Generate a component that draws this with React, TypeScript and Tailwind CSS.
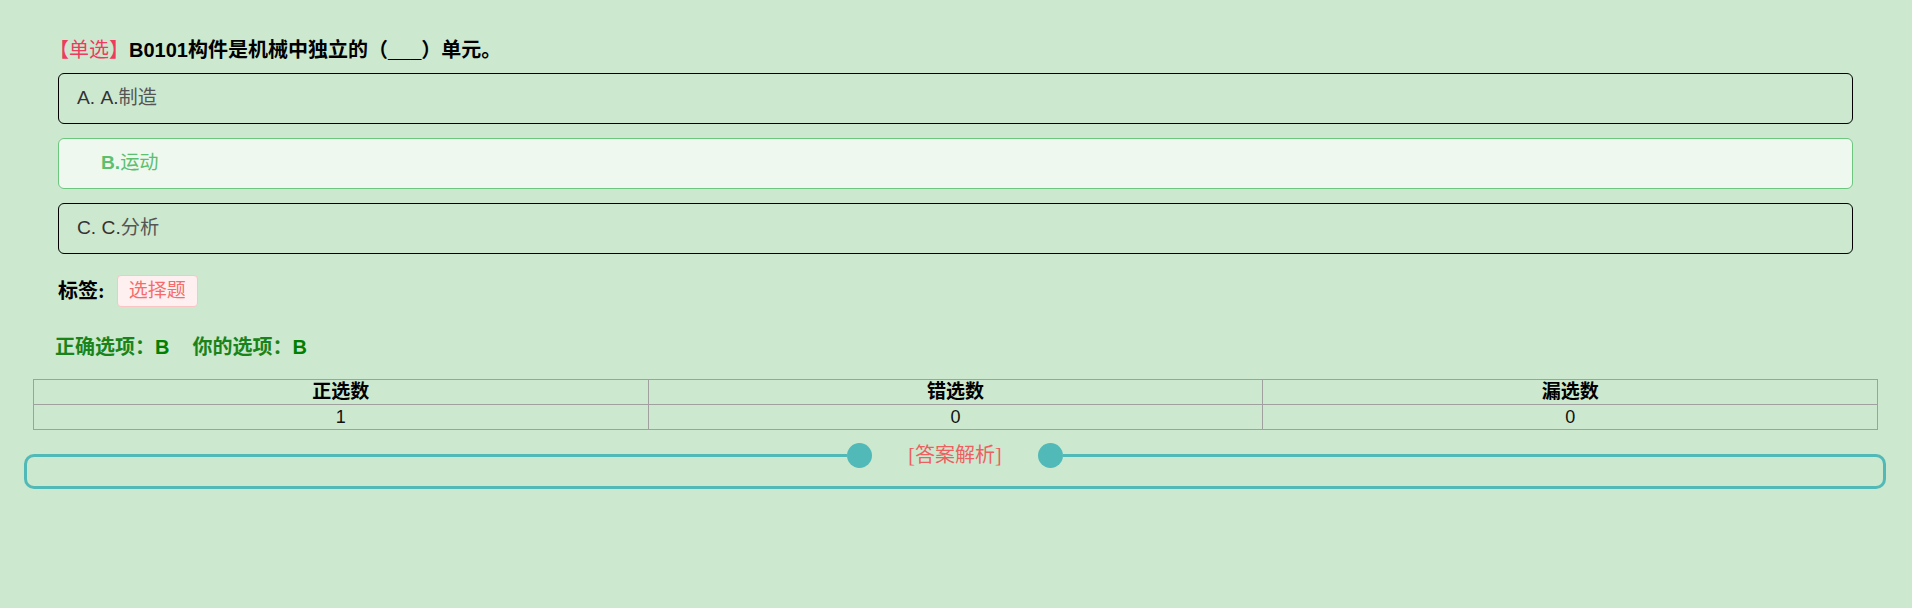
const serif = "font-['Liberation_Serif','Noto_Sans_CJK_SC',serif]";
const sans = "font-['Liberation_Sans','Noto_Sans_CJK_SC',sans-serif]";

const options = [
  { prefix: "A. ", text: "A.制造", picked: false },
  { prefix: "", text: "B.运动", picked: true },
  { prefix: "C. ", text: "C.分析", picked: false },
];

const stats = [
  { label: "正选数", value: 1 },
  { label: "错选数", value: 0 },
  { label: "漏选数", value: 0 },
];

function OptionRow({ prefix, text, picked }: { prefix: string; text: string; picked: boolean }) {
  if (picked) {
    return (
      <div className={`h-[51px] flex items-center pl-[42px] rounded-[6px] border border-[#6cc67e] bg-[#eef8ef] text-[19.2px] text-[#5cbf6e] ${sans}`}>
        <span className="font-bold">{text.slice(0, 2)}</span>
        <span>{text.slice(2)}</span>
      </div>
    );
  }
  return (
    <div className={`h-[51px] flex items-center pl-[18px] rounded-[6px] border border-black text-[19.2px] text-[#333] ${sans}`}>
      <span className="whitespace-pre">{prefix}</span>
      <span>{text.slice(0, 2)}</span>
      <span className="text-[#555]">{text.slice(2)}</span>
    </div>
  );
}

export default function App() {
  return (
    <div className="min-h-screen bg-[#cce8cf] pt-[38px] pl-[24px] pr-[26px]">
      <div className="pl-[9px] pr-[8px]">
        {/* question */}
        <div className={`pl-[16px] text-[20px] leading-[24px] font-bold text-black ${serif}`}>
          <span className="text-[#f03a5f] font-normal">【单选】</span>
          <span className={sans}>B0101</span>
          构件是机械中独立的（<span className={sans}>___</span>）单元。
        </div>

        <div className="mt-[11px] mx-[25px] flex flex-col gap-[14px]">
          {options.map((o) => (
            <OptionRow key={o.text} {...o} />
          ))}
        </div>

        {/* tags */}
        <div className={`mt-[21px] pl-[25px] flex items-center text-[20px] ${serif}`}>
          <span className="font-bold text-black">标签:</span>
          <span className="ml-[12px] h-[32px] px-[11px] flex items-center rounded-[4px] border border-[#fbc4c4] bg-[#fef0f0] text-[19px] text-[#f56c6c]">
            选择题
          </span>
        </div>

        {/* answers */}
        <div className={`mt-[28px] pl-[22px] text-[20px] leading-[24px] font-bold text-[#1a841a] ${serif}`}>
          <span>
            正确选项：<span className={`text-[#008000] ${sans}`}>B</span>
          </span>
          <span className="ml-[23px]">
            你的选项：<span className={`text-[#008000] ${sans}`}>B</span>
          </span>
        </div>

        {/* stats table */}
        <table className="mt-[20px] w-full table-fixed border-collapse">
          <thead>
            <tr>
              {stats.map((s) => (
                <th key={s.label} className={`h-[25px] p-0 border border-[#a0a0a0] text-[19px] leading-[24px] font-bold text-black ${serif}`}>
                  {s.label}
                </th>
              ))}
            </tr>
          </thead>
          <tbody>
            <tr>
              {stats.map((s) => (
                <td key={s.label} className={`h-[25px] p-0 border border-[#a0a0a0] text-center text-[18px] leading-[24px] text-[#111] ${sans}`}>
                  {s.value}
                </td>
              ))}
            </tr>
          </tbody>
        </table>
      </div>

      {/* analysis divider */}
      <fieldset className="mt-[13px] pb-[18px] border-[3px] border-[#51b9b8] rounded-[10px]">
        <legend className="mx-auto flex items-center">
          <span className="w-[25px] h-[25px] rounded-full bg-[#51b9b8]" />
          <span className={`mx-[36px] text-[20px] leading-[25px] text-[#ee5f5f] ${serif}`}>[答案解析]</span>
          <span className="w-[25px] h-[25px] rounded-full bg-[#51b9b8]" />
        </legend>
      </fieldset>
    </div>
  );
}
